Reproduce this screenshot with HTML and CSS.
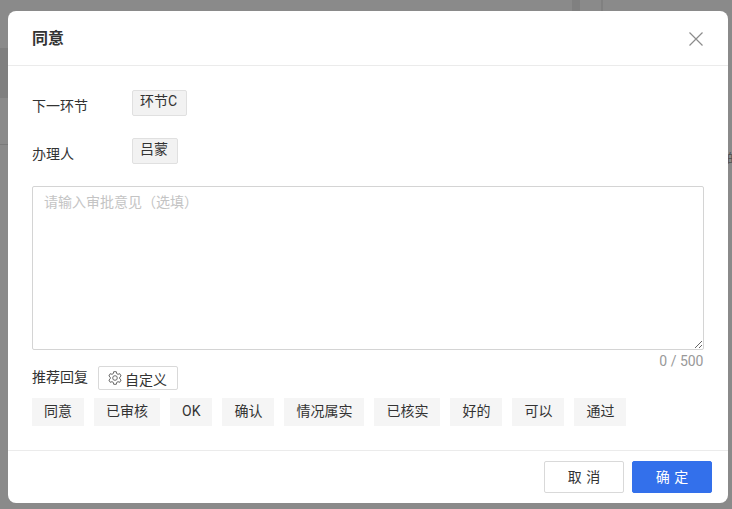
FILE: index.html
```html
<!DOCTYPE html>
<html lang="zh">
<head>
<meta charset="utf-8">
<title>同意</title>
<link rel="stylesheet" href="styles.css">
</head>
<body>
<div class="backdrop">
  <span class="behind-text">的</span>
  <section class="modal">
    <header class="modal-head">
      <h1 class="modal-title">同意</h1>
      <svg class="close" width="16" height="16" viewBox="0 0 16 16" aria-label="关闭"><path d="M1.500 1.500l13 13M14.500 1.500l-13 13" fill="none" stroke="#8c8c8c" stroke-width="1.200"/></svg>
    </header>
    <div class="modal-body">
      <div class="field field-next">
        <span class="field-label">下一环节</span>
        <span class="chip">环节C</span>
      </div>
      <div class="field field-person">
        <span class="field-label">办理人</span>
        <span class="chip">吕蒙</span>
      </div>
      <textarea class="opinion" placeholder="请输入审批意见（选填）"></textarea>
      <div class="counter">0 / 500</div>
      <div class="recommend">
        <span class="recommend-label">推荐回复</span>
        <button class="custom-btn" type="button">
          <svg width="16" height="16" viewBox="0 0 16 16"><path d="M6.700 1.700h2.600l.4 1.900 1.300.7 1.800-.6 1.300 2.300-1.400 1.300v1.400l1.400 1.300-1.300 2.300-1.800-.6-1.300.7-.4 1.900H6.700l-.4-1.900-1.300-.7-1.800.6-1.300-2.300 1.400-1.300V7.300L1.900 6l1.300-2.300 1.800.6 1.300-.7z" fill="none" stroke="#595959" stroke-width=".9" stroke-linejoin="round"/><circle cx="8" cy="8" r="2.300" fill="none" stroke="#595959" stroke-width=".9"/></svg>
          <span class="custom-text">自定义</span>
        </button>
      </div>
      <div class="replies">
        <span class="reply">同意</span>
        <span class="reply">已审核</span>
        <span class="reply">OK</span>
        <span class="reply">确认</span>
        <span class="reply">情况属实</span>
        <span class="reply">已核实</span>
        <span class="reply">好的</span>
        <span class="reply">可以</span>
        <span class="reply">通过</span>
      </div>
    </div>
    <footer class="modal-foot">
      <button class="btn btn-cancel" type="button">取 消</button>
      <button class="btn btn-ok" type="button">确 定</button>
    </footer>
  </section>
</div>
</body>
</html>
```
FILE: styles.css
```css
* { box-sizing: border-box; }
html, body { margin: 0; height: 100%; overflow: hidden; }
body {
  font-family: Roboto, "Noto Sans CJK SC", sans-serif;
  font-size: 14px;
  color: #333;
}
.backdrop {
  position: relative;
  width: 732px;
  height: 509px;
  padding: 11px 4px 6px 8px;
  background:
    linear-gradient(#7f7f7f, #7f7f7f) 0 48px / 8px 50px no-repeat,
    linear-gradient(#7a7a7a, #7a7a7a) 0 144px / 8px 1px no-repeat,
    linear-gradient(#808080, #808080) 572px 0 / 8px 11px no-repeat,
    linear-gradient(#808080, #808080) 601px 0 / 2px 11px no-repeat,
    #8a8a8a;
}
.behind-text {
  position: absolute;
  left: 727px;
  top: 150px;
  font-size: 12px;
  line-height: 18px;
  color: #4d4d4d;
}
.modal {
  position: relative;
  width: 719.5px;
  height: 492px;
  background: #fff;
  border-radius: 8px;
  display: flex;
  flex-direction: column;
}
.modal-head {
  height: 55px;
  flex: none;
  border-bottom: 1px solid #ebebeb;
  padding: 0 23.500px 2px 24px;
  display: flex;
  align-items: center;
  justify-content: space-between;
}
.modal-title {
  margin: 0;
  font-size: 16px;
  font-weight: 700;
  color: #333;
}
.close { margin-top: 3px; }
.modal-body {
  flex: 1;
  padding: 0 24px;
  display: flex;
  flex-direction: column;
}
.field { display: flex; }
.field-next { padding-top: 24px; height: 72px; }
.field-person { height: 48px; }
.field-label {
  width: 100px;
  flex: none;
  padding-top: 6px;
  line-height: 20px;
}
.chip {
  height: 26px;
  padding: 0 9px 0 7px;
  background: #f2f2f2;
  border: 1px solid #e0e0e0;
  border-radius: 2px;
  line-height: 21px;
  color: #333;
}
.opinion {
  display: block;
  width: 672px;
  height: 164px;
  flex: none;
  padding: 5px 11px;
  border: 1px solid #d4d4d4;
  border-radius: 2px;
  font: 14px/20px Roboto, "Noto Sans CJK SC", sans-serif;
  outline: none;
}
.opinion::placeholder { color: #c4c4c4; }
.counter {
  text-align: right;
  height: 16px;
  line-height: 22px;
  color: #999;
}
.recommend { display: flex; align-items: center; gap: 10px; height: 24px; }
.recommend-label { line-height: 20px; margin-top: -2px; }
.custom-btn {
  width: 80px;
  height: 24px;
  padding: 0 2px 0 0;
  display: flex;
  align-items: center;
  justify-content: center;
  gap: 2px;
  background: #fff;
  border: 1px solid #d9d9d9;
  border-radius: 2px;
  font: 14px Roboto, "Noto Sans CJK SC", sans-serif;
  color: #333;
}
.custom-text { padding-top: 2px; }
.replies { display: flex; gap: 10px; margin-top: 8px; }
.reply {
  height: 28px;
  padding: 0 12px;
  background: #f5f5f5;
  line-height: 27px;
  color: #333;
}
.modal-foot {
  height: 53px;
  flex: none;
  border-top: 1px solid #ebebeb;
  padding: 10px 15.500px 0 0;
  display: flex;
  justify-content: flex-end;
  gap: 8px;
}
.btn {
  width: 80px;
  height: 32px;
  border-radius: 2px;
  font: 14px Roboto, "Noto Sans CJK SC", sans-serif;
  word-spacing: 1px;
  padding: 0 0 2px;
}
.btn-cancel { background: #fff; border: 1px solid #d9d9d9; color: #333; }
.btn-ok { background: #3370eb; border: 1px solid #3370eb; color: #fff; }
```
